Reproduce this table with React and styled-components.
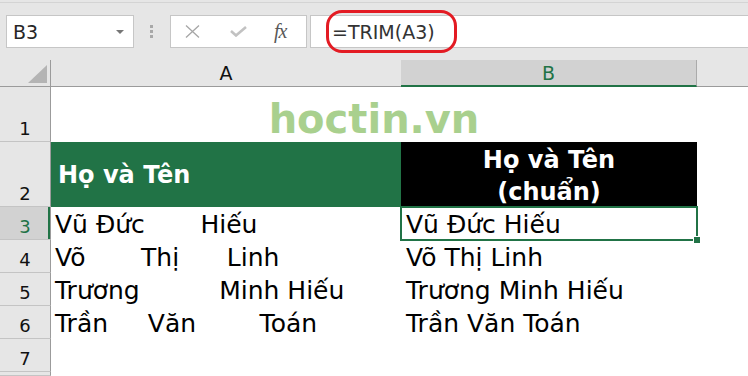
import React from "react";
import styled, { createGlobalStyle } from "styled-components";

const GlobalStyle = createGlobalStyle`
  html, body {
    margin: 0;
    padding: 0;
    background: #fff;
    overflow: hidden;
  }
  body {
    font-family: "DejaVu Sans", Verdana, sans-serif;
  }
`;

const GREEN = "#217346";

const Window = styled.div`
  width: 748px;
  height: 376px;
  overflow: hidden;
  background: #e6e6e6;
  padding-top: 2px;
  box-sizing: border-box;
`;

const FormulaBar = styled.div`
  display: flex;
  align-items: flex-start;
  height: 58px;
  box-sizing: border-box;
  border-top: 1px solid #d4d4d4;
  padding: 12px 0 0 6px;
`;

const NameBox = styled.div`
  display: flex;
  align-items: center;
  justify-content: space-between;
  width: 128px;
  height: 33px;
  box-sizing: border-box;
  border: 1px solid #c6c6c6;
  background: #fff;
  padding: 0 9px 0 6px;
  font-size: 19px;
  color: #262626;
`;

const Caret = styled.span`
  width: 0;
  height: 0;
  border-left: 4px solid transparent;
  border-right: 4px solid transparent;
  border-top: 4px solid #767676;
`;

const Grip = styled.div`
  display: flex;
  flex-direction: column;
  gap: 2px;
  margin: 10px 17px 0 16px;

  span {
    width: 3px;
    height: 3px;
    background: #a8a8a8;
  }
`;

const FxBox = styled.div`
  display: flex;
  align-items: center;
  width: 137px;
  height: 33px;
  box-sizing: border-box;
  border: 1px solid #c6c6c6;
  background: #fff;
  padding-left: 14px;
`;

const Fx = styled.span`
  font-family: "Liberation Serif", "Times New Roman", serif;
  font-style: italic;
  font-size: 20px;
  color: #595959;
  margin-left: 27px;
  letter-spacing: -1px;
`;

const FormulaInput = styled.div`
  position: relative;
  flex: 1;
  display: flex;
  align-items: center;
  height: 33px;
  box-sizing: border-box;
  margin-left: 3px;
  border: 1px solid #c6c6c6;
  border-right: none;
  background: #fff;
  padding-left: 21px;
  font-size: 19px;
  color: #333;
`;

const Ring = styled.span`
  position: absolute;
  left: 15px;
  top: -6px;
  width: 131px;
  height: 43px;
  box-sizing: border-box;
  border: 3px solid #e31b23;
  border-radius: 16px;
`;

const Sheet = styled.div`
  display: grid;
  grid-template-columns: 51px 350px 296px 1fr;
  grid-template-rows: 27px 55px 65px repeat(5, 33px) 1fr;
  height: 316px;
  background: #fff;
`;

const Corner = styled.div`
  display: flex;
  align-items: flex-end;
  justify-content: flex-end;
  padding: 0 3px 3px 0;
  background: #e6e6e6;
  border-right: 1px solid #9b9b9b;
  border-bottom: 1px solid #9b9b9b;

  &::after {
    content: "";
    width: 0;
    height: 0;
    border-left: 19px solid transparent;
    border-bottom: 18px solid #b4b4b4;
  }
`;

const ColHead = styled.div`
  display: flex;
  align-items: center;
  justify-content: center;
  font-size: 19px;
  background: ${(p) => (p.$active ? "#d2d2d2" : "#e6e6e6")};
  color: ${(p) => (p.$active ? GREEN : "#111")};
  border-bottom: ${(p) => (p.$active ? `2px solid ${GREEN}` : "1px solid #9b9b9b")};
  border-right: ${(p) => (p.$active ? "1px solid #ababab" : "none")};
`;

const RowHead = styled.div`
  display: flex;
  align-items: flex-end;
  justify-content: center;
  padding-bottom: 3px;
  box-sizing: border-box;
  font-size: 18px;
  line-height: 18px;
  background: ${(p) => (p.$active ? "#d2d2d2" : "#e6e6e6")};
  color: ${(p) => (p.$active ? GREEN : "#111")};
  border-bottom: 1px solid #c4c4c4;
  border-right: 1px solid #9b9b9b;
  box-shadow: ${(p) => (p.$active ? `inset -2px 0 0 ${GREEN}` : "none")};
`;

const Title = styled.div`
  grid-column: 2 / 4;
  display: flex;
  align-items: flex-end;
  justify-content: center;
  padding-bottom: 3px;
  font-size: 40px;
  line-height: 40px;
  font-weight: bold;
  color: #a9d08e;
`;

const HeaderCell = styled.div`
  display: flex;
  flex-direction: column;
  justify-content: center;
  align-items: ${(p) => (p.$center ? "center" : "flex-start")};
  padding: ${(p) => (p.$center ? "2px 0 0" : "0 0 0 7px")};
  background: ${(p) => p.$bg};
  color: #fff;
  font-size: 24px;
  line-height: 32px;
  font-weight: bold;
`;

const Cell = styled.div`
  position: relative;
  display: flex;
  align-items: flex-end;
  padding: 0 0 3px ${(p) => (p.$inset ? "5px" : "4px")};
  font-size: 25px;
  line-height: 25px;
  color: #000;
  white-space: pre;
  outline: ${(p) => (p.$selected ? `2px solid ${GREEN}` : "none")};
  outline-offset: -1px;
`;

const FillHandle = styled.span`
  position: absolute;
  right: -4px;
  bottom: -4px;
  width: 6px;
  height: 6px;
  background: ${GREEN};
  border: 1px solid #fff;
`;

const Blank = styled.div``;

// raw text keeps the extra spaces that TRIM removes in column B
const names = [
  { raw: "Vũ Đức       Hiếu", clean: "Vũ Đức Hiếu" },
  { raw: "Võ       Thị      Linh", clean: "Võ Thị Linh" },
  { raw: "Trương          Minh Hiếu", clean: "Trương Minh Hiếu" },
  { raw: "Trần     Văn        Toán", clean: "Trần Văn Toán" },
];

const CloseIcon = () => (
  <svg width="15" height="13" viewBox="0 0 15 13">
    <path d="M1 0.5 L14 12.5 M14 0.5 L1 12.5" stroke="#a6a6a6" strokeWidth="1.3" fill="none" />
  </svg>
);

const CheckIcon = () => (
  <svg width="17" height="11" viewBox="0 0 17 11" style={{ marginLeft: 30 }}>
    <path d="M1 5 L6 9.5 L16 1" stroke="#c2c2c2" strokeWidth="2.6" fill="none" />
  </svg>
);

export default function App() {
  return (
    <Window>
      <GlobalStyle />
      <FormulaBar>
        <NameBox>
          B3
          <Caret />
        </NameBox>
        <Grip>
          <span />
          <span />
          <span />
        </Grip>
        <FxBox>
          <CloseIcon />
          <CheckIcon />
          <Fx>fx</Fx>
        </FxBox>
        <FormulaInput>
          =TRIM(A3)
          <Ring />
        </FormulaInput>
      </FormulaBar>

      <Sheet>
        <Corner />
        <ColHead>A</ColHead>
        <ColHead $active>B</ColHead>
        <ColHead />

        <RowHead>1</RowHead>
        <Title>hoctin.vn</Title>
        <Blank />

        <RowHead>2</RowHead>
        <HeaderCell $bg={GREEN}>Họ và Tên</HeaderCell>
        <HeaderCell $bg="#000" $center>
          <span>Họ và Tên</span>
          <span>(chuẩn)</span>
        </HeaderCell>
        <Blank />

        {names.map((n, i) => (
          <React.Fragment key={n.clean}>
            <RowHead $active={i === 0}>{i + 3}</RowHead>
            <Cell>{n.raw}</Cell>
            <Cell $inset $selected={i === 0}>
              {n.clean}
              {i === 0 && <FillHandle />}
            </Cell>
            <Blank />
          </React.Fragment>
        ))}

        <RowHead>7</RowHead>
        <Blank />
        <Blank />
        <Blank />

        <RowHead />
      </Sheet>
    </Window>
  );
}
